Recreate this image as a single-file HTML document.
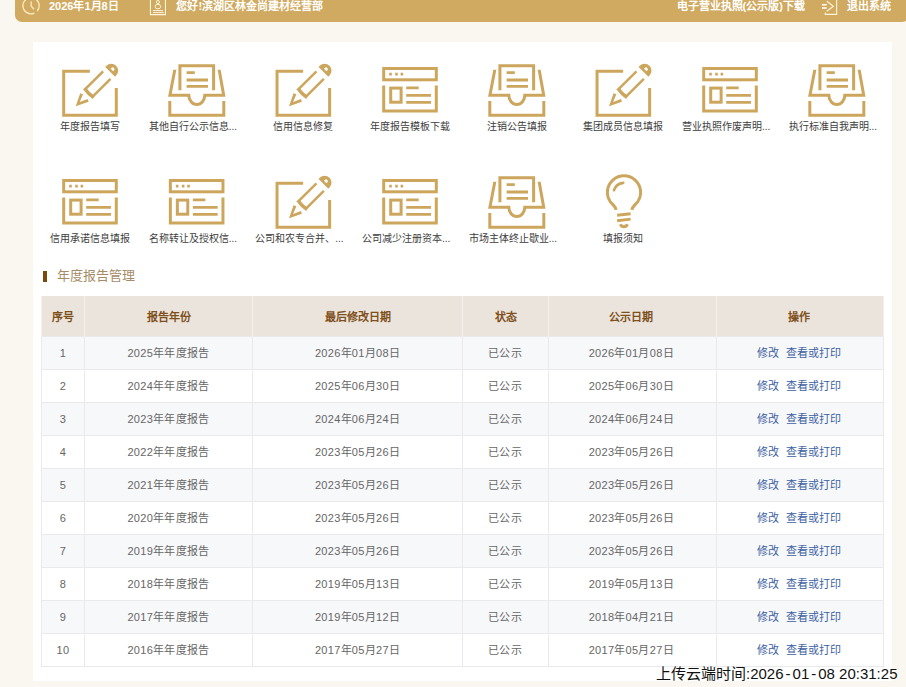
<!DOCTYPE html>
<html lang="zh-CN">
<head>
<meta charset="utf-8">
<title>年度报告管理</title>
<style>
*{box-sizing:border-box;margin:0;padding:0}
html,body{width:906px;height:687px;overflow:hidden}
body{position:relative;background:#faf7f0;font-family:"Liberation Sans",sans-serif;font-size:12px;color:#666}
.bar{position:absolute;left:15px;top:-10px;width:894px;height:31.5px;background:#d0aa60;border-radius:0 0 7px 7px;color:#fff;font-weight:bold;font-size:11px;line-height:14px}
.bar span{position:absolute;top:9px;white-space:nowrap}
.bar svg{position:absolute;left:0;top:10px;overflow:visible}
.panel{position:absolute;left:33px;top:41.5px;width:859px;height:639px;background:#fff}
.icons{position:absolute;left:0;top:0;width:906px;height:260px;overflow:visible}
.lab{position:absolute;width:96px;height:13px;line-height:13px;font-size:10px;color:#3d3d3d;text-align:center;white-space:nowrap;overflow:hidden}
.lab.tr{text-align:left}
.ttl{position:absolute;left:42.5px;top:271px;width:4.7px;height:11.3px;background:#7a4a0c}
.ttx{position:absolute;left:57px;top:266.5px;font-size:13px;line-height:17px;color:#a58c66;white-space:nowrap}
table{position:absolute;left:41px;top:296px;width:842px;border-collapse:collapse;table-layout:fixed;font-size:11px;line-height:14px}
th{height:40px;background:#eae4dd;color:#80501a;font-weight:bold;border-left:1px solid #f4efe9;border-right:1px solid #f4efe9;text-align:center}
td{height:33px;border:1px solid #eaeaed;text-align:center;color:#666;white-space:nowrap;padding:0;letter-spacing:0.3px}
td:last-child{padding-right:3px}
th{padding:2px 0 0 0}
th:nth-child(5){padding-right:3.4px}
th:nth-child(6){padding-right:2.4px}
td:nth-child(5){padding-right:2.5px}
td:nth-child(4){padding-right:1px}
tr:nth-child(odd) td{background:#f7f8fa}
tr:nth-child(even) td{background:#fff}
a{color:#3c5fa3;text-decoration:none;letter-spacing:0}
a.v{margin-left:7px}
.wm{position:absolute;left:656px;top:664px;font-size:15px;line-height:19px;color:#111;white-space:nowrap}
.wm i{font-style:normal;padding:0 2px}
</style>
</head>
<body>
<div class="bar">
<svg width="891" height="22" viewBox="15 0 891 22" fill="none" stroke="#fdeac0" stroke-width="1.3">
<path d="M34.4 13.1A8.1 8.1 0 1 1 37.2 11"/>
<path d="M31.2 1.8V6.2L33.6 8.8" stroke-linecap="round"/>
<g stroke="#fff6dc" stroke-width="1.1">
<path d="M150.45 -2V14.65H165.45V-2"/>
<circle cx="157.9" cy="2" r="1.55" stroke-width="1"/>
<ellipse cx="157.9" cy="6.6" rx="2.8" ry="2.3" stroke-width="1"/>
<path d="M152.8 10.6H163M153 12.6H163.8" stroke-width="1"/>
<path d="M836.65 -2V14.35H825.25V12.4"/>
<path d="M822 4.85H826.7M822 8.05H826.7" stroke-width="1.5" stroke="#fff"/>
<path d="M826.8 1.3L833.4 6.3L826.8 11.3" stroke-width="1.1"/>
</g>
</svg>
<span style="left:34px">2026年1月8日</span>
<span style="left:161.4px">您好!滨湖区林金尚建材经营部</span>
<span style="left:661.6px">电子营业执照(公示版)下载</span>
<span style="left:832px">退出系统</span>
</div>
<div class="panel"></div>
<svg class="icons" viewBox="0 0 906 260">
<defs>
<g id="ic-p" fill="none" stroke="#cda65d" stroke-width="3">
<path d="M89.8 71.3H63.7V115.2H116.3V88"/>
<g transform="translate(75.7 106.2) rotate(-45)">
<path d="M0 0L12.3 -5.9L13.6 -3.3L5.8 0L13.6 3.3L12.3 5.9Z" fill="#cda65d" stroke="none"/>
<path d="M18.9 -6.6Q17.7 0 18.9 6.6" stroke-width="3.4"/>
<path d="M18.4 -5.25H44M18.4 5.25H44" stroke-width="2.5"/>
<path d="M48.7 -6.9H50.3A6.9 6.9 0 0 1 50.3 6.9H48.7ZM51.3 -1.8V1.8H52.3A1.8 1.8 0 0 0 52.3 -1.8Z" fill="#cda65d" stroke="none" fill-rule="evenodd"/>
</g>
</g>
<g id="ic-i" fill="none" stroke="#cda65d" stroke-width="3">
<path d="M179.9 90.2V65.7H213.6V90.2"/>
<path d="M186.6 72.6H194.8M186.6 80H208M186.6 86.4H208" stroke-width="2.8"/>
<clipPath id="cl-i"><rect x="160" y="69.8" width="80" height="60"/></clipPath><path clip-path="url(#cl-i)" d="M175.2 67.8L169.9 95.2H188.8A8 9.4 0 0 0 204.8 95.2H223.7L218.8 67.8"/>
<path d="M169.8 100.9V115.2H223.8V100.9"/>
</g>
<g id="ic-w" fill="none" stroke="#cda65d" stroke-width="3">
<rect x="383.7" y="68.5" width="52.6" height="11.3"/>
<path d="M389.2 74.1H391.8M395.2 74.1H397.8M400.6 74.1H403.2" stroke-width="2.6"/>
<path d="M383.7 85.6V111.1H436.3V85.6"/>
<rect x="390.7" y="88.1" width="10.4" height="14.1"/>
<path d="M406.2 87.9H418.7M406.2 95.3H431M406.2 102.4H431" stroke-width="2.8"/>
</g>
<g id="ic-b" fill="none" stroke="#cda65d" stroke-width="2.8">
<path d="M616.1 209.9C615.6 206.3 612.6 205 610.05 201.3A16.6 16.6 0 1 1 637.95 201.3C635.4 205 632.4 206.3 631.9 209.9" stroke-linejoin="round" stroke-width="3"/>
<path d="M613.9 190.2A11 11 0 0 1 623.2 182.8" stroke-linecap="round" stroke-width="2.7"/>
<path d="M617.1 215.3L630.6 213.7M617.1 220.7L630.6 219.1" stroke-width="2.9"/>
<path d="M620.4 224.3A3.7 3.7 0 0 0 627.4 224.3" stroke-width="3"/>
</g>
</defs>
<use href="#ic-p" x="0.00" y="0"/><use href="#ic-i" x="0.00" y="0"/><use href="#ic-p" x="213.34" y="0"/><use href="#ic-w" x="0.00" y="0"/><use href="#ic-i" x="320.01" y="0"/><use href="#ic-p" x="533.35" y="0"/><use href="#ic-w" x="320.01" y="0"/><use href="#ic-i" x="640.02" y="0"/><use href="#ic-w" x="-320.01" y="112"/><use href="#ic-w" x="-213.34" y="112"/><use href="#ic-p" x="213.34" y="112"/><use href="#ic-w" x="0.00" y="112"/><use href="#ic-i" x="320.01" y="112"/><use href="#ic-b" x="0.00" y="0"/>
</svg>
<div class="lab" style="left:42.0px;top:119.5px">年度报告填写</div><div class="lab tr" style="left:148.7px;top:119.5px">其他自行公示信息...</div><div class="lab" style="left:255.3px;top:119.5px">信用信息修复</div><div class="lab" style="left:362.0px;top:119.5px">年度报告模板下载</div><div class="lab" style="left:468.7px;top:119.5px">注销公告填报</div><div class="lab" style="left:575.4px;top:119.5px">集团成员信息填报</div><div class="lab tr" style="left:682.0px;top:119.5px">营业执照作废声明...</div><div class="lab tr" style="left:788.7px;top:119.5px">执行标准自我声明...</div><div class="lab" style="left:42.0px;top:231.5px">信用承诺信息填报</div><div class="lab tr" style="left:148.7px;top:231.5px">名称转让及授权信...</div><div class="lab tr" style="left:255.3px;top:231.5px">公司和农专合并、...</div><div class="lab tr" style="left:362.0px;top:231.5px">公司减少注册资本...</div><div class="lab tr" style="left:468.7px;top:231.5px">市场主体终止歇业...</div><div class="lab" style="left:575.4px;top:231.5px">填报须知</div>
<div class="ttl"></div><div class="ttx">年度报告管理</div>
<table>
<colgroup><col style="width:43px"><col style="width:168px"><col style="width:210px"><col style="width:86px"><col style="width:168px"><col style="width:167px"></colgroup>
<thead><tr><th>序号</th><th>报告年份</th><th>最后修改日期</th><th>状态</th><th>公示日期</th><th>操作</th></tr></thead>
<tbody>
<tr><td>1</td><td>2025年年度报告</td><td>2026年01月08日</td><td>已公示</td><td>2026年01月08日</td><td><a>修改</a><a class="v">查看或打印</a></td></tr>
<tr><td>2</td><td>2024年年度报告</td><td>2025年06月30日</td><td>已公示</td><td>2025年06月30日</td><td><a>修改</a><a class="v">查看或打印</a></td></tr>
<tr><td>3</td><td>2023年年度报告</td><td>2024年06月24日</td><td>已公示</td><td>2024年06月24日</td><td><a>修改</a><a class="v">查看或打印</a></td></tr>
<tr><td>4</td><td>2022年年度报告</td><td>2023年05月26日</td><td>已公示</td><td>2023年05月26日</td><td><a>修改</a><a class="v">查看或打印</a></td></tr>
<tr><td>5</td><td>2021年年度报告</td><td>2023年05月26日</td><td>已公示</td><td>2023年05月26日</td><td><a>修改</a><a class="v">查看或打印</a></td></tr>
<tr><td>6</td><td>2020年年度报告</td><td>2023年05月26日</td><td>已公示</td><td>2023年05月26日</td><td><a>修改</a><a class="v">查看或打印</a></td></tr>
<tr><td>7</td><td>2019年年度报告</td><td>2023年05月26日</td><td>已公示</td><td>2023年05月26日</td><td><a>修改</a><a class="v">查看或打印</a></td></tr>
<tr><td>8</td><td>2018年年度报告</td><td>2019年05月13日</td><td>已公示</td><td>2019年05月13日</td><td><a>修改</a><a class="v">查看或打印</a></td></tr>
<tr><td>9</td><td>2017年年度报告</td><td>2019年05月12日</td><td>已公示</td><td>2018年04月21日</td><td><a>修改</a><a class="v">查看或打印</a></td></tr>
<tr><td>10</td><td>2016年年度报告</td><td>2017年05月27日</td><td>已公示</td><td>2017年05月27日</td><td><a>修改</a><a class="v">查看或打印</a></td></tr>
</tbody>
</table>
<div class="wm">上传云端时间:2026<i>-</i>01<i>-</i>08 20:31:25</div>
</body>
</html>
